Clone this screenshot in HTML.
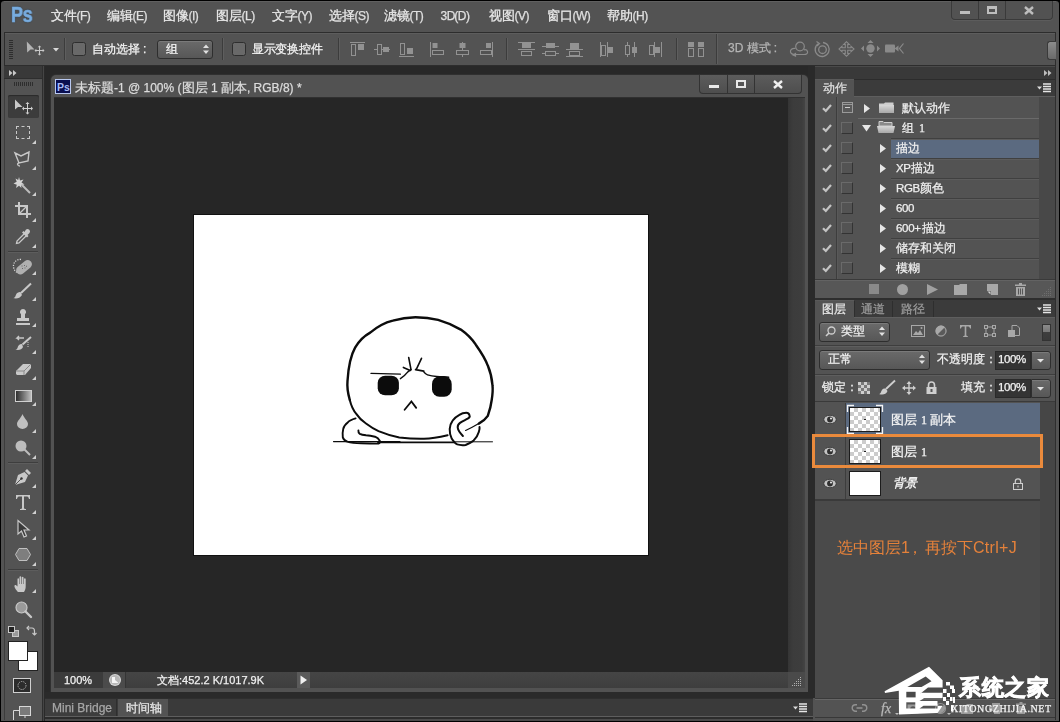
<!DOCTYPE html>
<html><head><meta charset="utf-8">
<style>
*{box-sizing:border-box;margin:0;padding:0}
html,body{width:1060px;height:722px;overflow:hidden;background:#000}
body{position:relative;font-family:"Liberation Sans",sans-serif;font-size:12px;color:#e6e6e6}
.a{position:absolute}
.t{position:absolute;white-space:nowrap;line-height:1;will-change:transform;-webkit-text-stroke:0.25px currentColor}
svg{position:absolute;overflow:visible}
.cb{width:14px;height:14px;border:1.5px solid #2e2e2e;border-radius:2.5px;background:#696969}
.sel{border:1px solid #2e2e2e;border-radius:3px;background:linear-gradient(#6a6a6a,#575757);box-shadow:inset 0 1px 0 #7a7a7a}
.lt{font-size:12px}
.mi{top:9px;font-size:13px;color:#ebebeb}
.mi span{font-size:12px;letter-spacing:-0.5px;color:#e0e0e0;margin-left:-0.5px}
</style></head><body>
<!-- app frame -->
<div class="a" style="left:1px;top:1px;width:1058px;height:720px;background:#535353;border-radius:3px 3px 0 0"></div>

<!-- MENU BAR -->
<div class="a" style="left:4px;top:1px;width:1052px;height:1px;background:#606060"></div>
<div id="menubar">
<div class="t" style="left:11px;top:4px;font-size:22px;font-weight:bold;color:#78acdf;letter-spacing:-0.5px;transform:scaleX(0.82);transform-origin:0 0;-webkit-text-stroke:0.6px #78acdf;text-shadow:0 0 2px #213a55">Ps</div>
<div class="t mi" style="left:51px">文件<span>(F)</span></div>
<div class="t mi" style="left:107px">编辑<span>(E)</span></div>
<div class="t mi" style="left:163px">图像<span>(I)</span></div>
<div class="t mi" style="left:216px">图层<span>(L)</span></div>
<div class="t mi" style="left:272px">文字<span>(Y)</span></div>
<div class="t mi" style="left:329px">选择<span>(S)</span></div>
<div class="t mi" style="left:384px">滤镜<span>(T)</span></div>
<div class="t mi" style="left:441px"><span style="font-size:12px">3D</span><span>(D)</span></div>
<div class="t mi" style="left:489px">视图<span>(V)</span></div>
<div class="t mi" style="left:547px">窗口<span>(W)</span></div>
<div class="t mi" style="left:607px">帮助<span>(H)</span></div>
<!-- window controls -->
<div class="a" style="left:951px;top:1px;width:102px;height:19px;border:1px solid #3a3a3a;border-top:none;border-radius:0 0 4px 4px;background:#525252;box-shadow:0 1px 0 #5c5c5c"></div>
<div class="a" style="left:978px;top:1px;width:1px;height:18px;background:#3a3a3a"></div>
<div class="a" style="left:1005px;top:1px;width:1px;height:18px;background:#3a3a3a"></div>
<div class="a" style="left:960px;top:11px;width:10px;height:3px;background:#bdbdbd"></div>
<div class="a" style="left:987px;top:6px;width:10px;height:8px;border:2px solid #bdbdbd;border-top-width:3px"></div>
<svg style="left:1024px;top:6px" width="10" height="9"><path d="M1 1L9 8M9 1L1 8" stroke="#bdbdbd" stroke-width="2.4"/></svg>
</div>

<!-- OPTIONS TOOLBAR -->
<div class="a" style="left:4px;top:32px;width:1052px;height:34px;background:#535353;border:1px solid #2d2d2d"></div>
<div class="a" style="left:5px;top:33px;width:1050px;height:1px;background:#5d5d5d"></div>
<!-- grip -->
<div class="a" style="left:9px;top:40px;width:4px;height:20px;background:repeating-linear-gradient(#2e2e2e 0 1px,transparent 1px 2px)"></div>
<!-- move tool icon -->
<svg style="left:26px;top:41px" width="20" height="16"><path d="M0.8 0.5L1.2 11.5L4.5 8.5L8.5 8.5Z" fill="#b4b4b4"/><path d="M13.5 5.5V13.5M9.5 9.5H17.5" stroke="#c8c8c8" stroke-width="1"/><path d="M13.5 4.5l-1.8 1.8h3.6zM13.5 14.5l-1.8-1.8h3.6zM8.5 9.5l1.8-1.8v3.6zM18.5 9.5l-1.8-1.8v3.6z" fill="#c8c8c8"/></svg>
<svg style="left:53px;top:48px" width="6" height="4"><path d="M0 0H6L3 3.5Z" fill="#d8d8d8"/></svg>
<div class="a" style="left:64px;top:38px;width:1px;height:22px;background:#3c3c3c;box-shadow:1px 0 0 #5e5e5e"></div>
<div class="a cb" style="left:72px;top:42px"></div>
<div class="t" style="left:92px;top:43px;font-size:12px;color:#f4f4f4">自动选择<span style="margin-left:3px">:</span></div>
<div class="a sel" style="left:157px;top:40px;width:56px;height:19px"></div>
<div class="t" style="left:166px;top:43px;font-size:12px;color:#f4f4f4">组</div>
<svg style="left:203px;top:44px" width="6" height="11"><path d="M0 4L3 0.5L6 4ZM0 6.5L3 10L6 6.5Z" fill="#e0e0e0"/></svg>
<div class="a" style="left:222px;top:38px;width:1px;height:22px;background:#3c3c3c;box-shadow:1px 0 0 #5e5e5e"></div>
<div class="a cb" style="left:232px;top:42px"></div>
<div class="t" style="left:252px;top:43px;font-size:12px;color:#f4f4f4;letter-spacing:-0.3px">显示变换控件</div>
<div class="a" style="left:338px;top:38px;width:1px;height:22px;background:#3c3c3c;box-shadow:1px 0 0 #5e5e5e"></div>
<!-- align icons -->
<svg style="left:350px;top:42px" width="16" height="15" fill="none" stroke="#929292"><path d="M0 0.5H15"/><rect x="1.5" y="2.5" width="4" height="11"/><rect x="8" y="2" width="6" height="6" fill="#929292" stroke="none"/></svg>
<svg style="left:374px;top:42px" width="16" height="15" fill="none" stroke="#929292"><path d="M0 7.5H16"/><rect x="3.5" y="2.5" width="4" height="10" fill="#535353"/><rect x="9" y="5" width="6" height="5" fill="#929292" stroke="none"/></svg>
<svg style="left:399px;top:42px" width="16" height="15" fill="none" stroke="#929292"><path d="M0 14.5H15"/><rect x="1.5" y="1.5" width="4" height="11"/><rect x="8" y="6" width="6" height="6" fill="#929292" stroke="none"/></svg>
<svg style="left:430px;top:42px" width="15" height="15" fill="none" stroke="#929292"><path d="M0.5 0V15"/><rect x="2.5" y="1" width="5" height="5" fill="#929292" stroke="none"/><rect x="2.5" y="8.5" width="11" height="4"/></svg>
<svg style="left:455px;top:42px" width="15" height="15" fill="none" stroke="#929292"><path d="M7.5 0V15"/><rect x="4.5" y="1" width="6" height="5" fill="#929292" stroke="none"/><rect x="1.5" y="8.5" width="12" height="4" fill="#535353"/></svg>
<svg style="left:479px;top:42px" width="15" height="15" fill="none" stroke="#929292"><path d="M13.5 0V15"/><rect x="7" y="1" width="5" height="5" fill="#929292" stroke="none"/><rect x="1.5" y="8.5" width="11" height="4"/></svg>
<div class="a" style="left:506px;top:38px;width:1px;height:22px;background:#3c3c3c;box-shadow:1px 0 0 #5e5e5e"></div>
<svg style="left:518px;top:42px" width="17" height="15" fill="none" stroke="#929292"><path d="M0 0.5H17M0 7.5H17"/><rect x="4" y="1" width="9" height="5" fill="#929292" stroke="none"/><rect x="3.5" y="9.5" width="10" height="4"/></svg>
<svg style="left:542px;top:42px" width="17" height="15" fill="none" stroke="#929292"><path d="M0 4.5H17M0 11.5H17"/><rect x="4" y="1" width="9" height="5" fill="#929292" stroke="none"/><rect x="3.5" y="9.5" width="10" height="4" fill="#535353"/></svg>
<svg style="left:566px;top:42px" width="17" height="15" fill="none" stroke="#929292"><path d="M0 7.5H17M0 14.5H17"/><rect x="4" y="1" width="9" height="6" fill="#929292" stroke="none"/><rect x="3.5" y="9.5" width="10" height="4"/></svg>
<svg style="left:600px;top:42px" width="14" height="15" fill="none" stroke="#929292"><path d="M0.5 0V15M7.5 0V15"/><rect x="1.5" y="3.5" width="4" height="10"/><rect x="8" y="5" width="5" height="6" fill="#929292" stroke="none"/></svg>
<svg style="left:624px;top:42px" width="14" height="15" fill="none" stroke="#929292"><path d="M3.5 0V15M10.5 0V15"/><rect x="1.5" y="3.5" width="4" height="9" fill="#535353"/><rect x="8" y="5" width="5" height="6" fill="#929292" stroke="none"/></svg>
<svg style="left:648px;top:42px" width="14" height="15" fill="none" stroke="#929292"><path d="M6.5 0V15M13.5 0V15"/><rect x="1.5" y="3.5" width="4" height="9"/><rect x="7" y="5" width="5" height="6" fill="#929292" stroke="none"/></svg>
<div class="a" style="left:676px;top:38px;width:1px;height:22px;background:#3c3c3c;box-shadow:1px 0 0 #5e5e5e"></div>
<svg style="left:688px;top:42px" width="16" height="15" fill="none" stroke="#929292"><rect x="0.5" y="6.5" width="5" height="8"/><rect x="10.5" y="6.5" width="5" height="8"/><rect x="0" y="0" width="6" height="5" fill="#929292" stroke="none"/><rect x="10" y="0" width="6" height="5" fill="#929292" stroke="none"/></svg>
<div class="a" style="left:716px;top:34px;width:1px;height:30px;background:#3c3c3c;box-shadow:1px 0 0 #5e5e5e"></div>
<div class="t" style="left:728px;top:42px;font-size:12px;color:#b4b4b4">3D 模式<span style="margin-left:3px">:</span></div>
<!-- 3d icons -->
<svg style="left:789px;top:41px" width="20" height="15" fill="none" stroke="#8a8a8a" stroke-width="1.2"><circle cx="11" cy="5.5" r="4.3"/><path d="M6.5 7.5C3 7 1 9 1.5 11C2 13 4 13.5 6 13.5H15C17.5 13.5 19 12.5 18.5 10.5C18 9 16.5 8.5 15 8.8"/><path d="M4 14L6.5 12.5L6.5 15Z" fill="#8a8a8a"/></svg>
<svg style="left:814px;top:41px" width="17" height="16" fill="none" stroke="#8a8a8a" stroke-width="1.3"><path d="M4.5 2.5A7 7 0 1 0 9 1.5"/><circle cx="8.5" cy="8.7" r="3.8"/><path d="M2.5 0.5L5.5 2.5L3 5" stroke-width="1.2"/></svg>
<svg style="left:838px;top:41px" width="17" height="16" fill="none" stroke="#8a8a8a" stroke-width="1.1"><path d="M8.5 0.7L5.7 3.5H7.3V6.8H4V5.2L1 8L4 10.8V9.2H7.3V12.5H5.7L8.5 15.3L11.3 12.5H9.7V9.2H13V10.8L16 8L13 5.2V6.8H9.7V3.5H11.3Z"/></svg>
<svg style="left:861px;top:40px" width="19" height="17" fill="#8a8a8a"><path d="M9.5 0L6.5 3H12.5ZM9.5 17L6.5 14H12.5ZM0 8.5L3 5.5V11.5ZM19 8.5L16 5.5V11.5Z"/><circle cx="9.5" cy="8.5" r="4.2"/></svg>
<svg style="left:885px;top:43px" width="19" height="11" fill="#8a8a8a"><rect x="0" y="1.5" width="10" height="8" rx="1"/><path d="M9.5 5.5L13.5 2.5V8.5Z"/><path d="M18.5 0.5L14.5 5.5L18.5 10.5" fill="none" stroke="#8a8a8a" stroke-width="1.2"/></svg>
<div class="a" style="left:1047px;top:41px;width:9px;height:19px;background:linear-gradient(#8c8c8c,#6a6a6a);border-radius:3px 0 0 3px;border:1px solid #3a3a3a;border-right:none"></div>

<!-- WORKSPACE -->
<div class="a" style="left:42px;top:66px;width:772px;height:632px;background:#282828"></div>

<!-- LEFT TOOLS PANEL -->
<div class="a" style="left:4px;top:66px;width:38px;height:654px;background:#535353;border-left:1px solid #3c3c3c"></div>
<div class="a" style="left:4px;top:66px;width:38px;height:13px;background:#393939;border-bottom:1px solid #2e2e2e"></div>
<svg style="left:9px;top:70px" width="8" height="6" fill="#c8c8c8"><path d="M0 0L3.5 3L0 6ZM4 0L7.5 3L4 6Z"/></svg>
<div class="a" style="left:14px;top:82px;width:19px;height:4px;background:repeating-linear-gradient(90deg,#2e2e2e 0 1px,transparent 1px 2px)"></div>
<div class="a" style="left:8px;top:95px;width:31px;height:23px;background:#3c3c3c;border-radius:2px;box-shadow:inset 0 1px 1px #2a2a2a"></div>
<!-- move -->
<svg style="left:14px;top:99px" width="20" height="15"><path d="M1 0.5V10.5L4 8H8.5Z" fill="#c8c8c8"/><path d="M13.5 4.5V14M9 9.5H18" stroke="#d0d0d0" stroke-width="1"/><path d="M13.5 3l-2 2h4zM13.5 15.5l-2-2h4zM8 9.5l2-2v4zM19 9.5l-2-2v4z" fill="#d0d0d0"/></svg>
<!-- marquee -->
<div class="a" style="left:16px;top:126px;width:14px;height:13px;border:1.5px dashed #c8c8c8"></div>
<svg style="left:32px;top:140px" width="4" height="4"><path d="M4 0V4H0Z" fill="#d0d0d0"/></svg>
<!-- lasso -->
<svg style="left:14px;top:151px" width="17" height="16" fill="none" stroke="#c8c8c8" stroke-width="1.4"><path d="M1 2L7 5L15 1L14 10L5 12ZM5 12C3 12 3 15 6 15"/></svg>
<svg style="left:32px;top:166px" width="4" height="4"><path d="M4 0V4H0Z" fill="#d0d0d0"/></svg>
<!-- wand -->
<svg style="left:13px;top:176px" width="19" height="19"><path d="M6 1L7 4.5L10.5 3.5L8.5 6.5L11.5 8.5L8 9L8.5 12L6 9.8L3 12L3.8 8.7L0.5 7.5L3.7 5.8L2.5 2.5L5.2 4Z" fill="#d4d4d4"/><path d="M8.5 8.5L17 17" stroke="#bdbdbd" stroke-width="2"/></svg>
<svg style="left:32px;top:192px" width="4" height="4"><path d="M4 0V4H0Z" fill="#d0d0d0"/></svg>
<!-- crop -->
<svg style="left:15px;top:202px" width="16" height="16" fill="none" stroke="#c8c8c8" stroke-width="2"><path d="M4 0V12H16M0 4H12V16"/><path d="M4 12L12 4" stroke-width="1.2"/></svg>
<svg style="left:32px;top:218px" width="4" height="4"><path d="M4 0V4H0Z" fill="#d0d0d0"/></svg>
<!-- eyedropper -->
<svg style="left:15px;top:228px" width="17" height="17"><path d="M11 1.5a2.5 2.5 0 0 1 3.5 3.5l-2 2l1 1l-1.5 1.5l-5-5l1.5-1.5l1 1z" fill="#c8c8c8"/><path d="M9 6L2 13L1.5 15.5L4 15L11 8" fill="none" stroke="#c8c8c8" stroke-width="1.3"/></svg>
<svg style="left:32px;top:244px" width="4" height="4"><path d="M4 0V4H0Z" fill="#d0d0d0"/></svg>
<div class="a" style="left:8px;top:251px;width:30px;height:1px;background:#3e3e3e;box-shadow:0 1px 0 #5d5d5d"></div>
<!-- healing -->
<svg style="left:12px;top:258px" width="21" height="17"><path d="M9 1.5C4 1 1 5 1.5 9C2 12 3.5 14 6 14.5" fill="none" stroke="#d8d8d8" stroke-width="1.3" stroke-dasharray="1.2 1.3"/><rect x="3" y="5" width="18" height="8.5" rx="4.2" transform="rotate(-40 12 9.2)" fill="#b0b0b0"/><path d="M9.5 7.5h1v1h-1zM12 7h1v1h-1zM10 10h1v1h-1zM12.5 9.5h1v1h-1zM14 7.8h1v1h-1z" fill="#6a6a6a"/></svg>
<svg style="left:32px;top:271px" width="4" height="4"><path d="M4 0V4H0Z" fill="#d0d0d0"/></svg>
<!-- brush -->
<svg style="left:13px;top:283px" width="19" height="16"><path d="M18 0.5L8 10" stroke="#c8c8c8" stroke-width="2"/><path d="M7.5 9C4.5 8.5 3 11 2.5 13C2 14.5 1 15 0 15C3 16 7 15.5 9 12Z" fill="#c8c8c8"/></svg>
<svg style="left:32px;top:297px" width="4" height="4"><path d="M4 0V4H0Z" fill="#d0d0d0"/></svg>
<!-- stamp -->
<svg style="left:15px;top:309px" width="16" height="17" fill="#c8c8c8"><path d="M8 0a3 3 0 0 1 2 5.3V9H14V12H2V9H6V5.3A3 3 0 0 1 8 0Z"/><rect x="1" y="14" width="14" height="2"/></svg>
<svg style="left:32px;top:323px" width="4" height="4"><path d="M4 0V4H0Z" fill="#d0d0d0"/></svg>
<!-- history brush -->
<svg style="left:14px;top:336px" width="18" height="15"><path d="M17 1L8.5 8.5" stroke="#c8c8c8" stroke-width="2"/><path d="M8 8C5 8 4 10 3.5 12C3 13 2 13.5 1 13.5C4 14.5 8 14 9 11Z" fill="#c8c8c8"/><path d="M10 2H3L5 0M3 2L5 4" fill="none" stroke="#c8c8c8" stroke-width="1.4"/><path d="M14 6V11" stroke="#c8c8c8" stroke-dasharray="1 1"/></svg>
<svg style="left:32px;top:350px" width="4" height="4"><path d="M4 0V4H0Z" fill="#d0d0d0"/></svg>
<!-- eraser -->
<svg style="left:15px;top:362px" width="17" height="15"><path d="M1 9L8 2H16L16 6L10 13H2L1 12Z" fill="#c8c8c8"/><path d="M1 9H9L16 2M9 9V13" fill="none" stroke="#8a8a8a" stroke-width="1"/></svg>
<svg style="left:32px;top:376px" width="4" height="4"><path d="M4 0V4H0Z" fill="#d0d0d0"/></svg>
<!-- gradient -->
<div class="a" style="left:15px;top:390px;width:17px;height:12px;border:1px solid #d0d0d0;background:linear-gradient(90deg,#2e2e2e,#bdbdbd)"></div>
<svg style="left:32px;top:402px" width="4" height="4"><path d="M4 0V4H0Z" fill="#d0d0d0"/></svg>
<!-- blur drop -->
<svg style="left:16px;top:414px" width="13" height="15"><path d="M6.5 0C5 4 1 7 1 10a5.5 5 0 0 0 11 0C12 7 8 4 6.5 0Z" fill="#c0c0c0"/></svg>
<svg style="left:32px;top:429px" width="4" height="4"><path d="M4 0V4H0Z" fill="#d0d0d0"/></svg>
<!-- dodge -->
<svg style="left:15px;top:440px" width="16" height="16"><circle cx="6" cy="6" r="5.5" fill="#bdbdbd"/><path d="M9 9L15 15" stroke="#bdbdbd" stroke-width="2"/></svg>
<svg style="left:32px;top:455px" width="4" height="4"><path d="M4 0V4H0Z" fill="#d0d0d0"/></svg>
<div class="a" style="left:8px;top:462px;width:30px;height:1px;background:#3e3e3e;box-shadow:0 1px 0 #5d5d5d"></div>
<!-- pen -->
<svg style="left:14px;top:468px" width="18" height="18"><path d="M13 1L17 5L15 7L11 3Z" fill="#c8c8c8"/><path d="M10.5 4L14 7.5L11 14L1 17L4 7Z" fill="#c8c8c8"/><path d="M1 17L7 11" stroke="#555" stroke-width="1"/><circle cx="7.5" cy="10.5" r="1.2" fill="#333"/></svg>
<svg style="left:32px;top:484px" width="4" height="4"><path d="M4 0V4H0Z" fill="#d0d0d0"/></svg>
<!-- type -->
<svg style="left:16px;top:495px" width="14" height="15" fill="#c8c8c8"><path d="M0 0H14V4H13C12.5 2 12 1.5 10 1.5H8V13C8 13.5 8.5 14 10 14V15H4V14C5.5 14 6 13.5 6 13V1.5H4C2 1.5 1.5 2 1 4H0Z"/></svg>
<svg style="left:32px;top:510px" width="4" height="4"><path d="M4 0V4H0Z" fill="#d0d0d0"/></svg>
<!-- path select -->
<svg style="left:17px;top:520px" width="13" height="18"><path d="M1 0.5V14L4.5 11L7 17L9.5 16L7 10H12Z" fill="#3a3a3a" stroke="#c8c8c8" stroke-width="1.2"/></svg>
<svg style="left:32px;top:536px" width="4" height="4"><path d="M4 0V4H0Z" fill="#d0d0d0"/></svg>
<!-- shape -->
<svg style="left:15px;top:548px" width="16" height="13"><path d="M4 0.5H12L15.5 6.5L12 12.5H4L0.5 6.5Z" fill="#7e7e7e" stroke="#c0c0c0" stroke-width="1"/></svg>
<svg style="left:32px;top:562px" width="4" height="4"><path d="M4 0V4H0Z" fill="#d0d0d0"/></svg>
<div class="a" style="left:8px;top:569px;width:30px;height:1px;background:#3e3e3e;box-shadow:0 1px 0 #5d5d5d"></div>
<!-- hand -->
<svg style="left:14px;top:576px" width="17" height="16" fill="#c8c8c8"><path d="M4 16C2 14 0 11 0.5 9.5C1 8.5 2.5 9 3.5 10.5V3C3.5 2 5 2 5 3V8H5.5V1C5.5 0 7.2 0 7.2 1V8H7.8V1.5C7.8 0.5 9.5 0.5 9.5 1.5V8H10V3C10 2 11.7 2 11.7 3V10C11.7 13 11 14.5 10 16Z"/></svg>
<svg style="left:32px;top:589px" width="4" height="4"><path d="M4 0V4H0Z" fill="#d0d0d0"/></svg>
<!-- zoom -->
<svg style="left:15px;top:601px" width="17" height="17"><circle cx="6.5" cy="6.5" r="5.5" fill="#9a9a9a" stroke="#c8c8c8" stroke-width="1.2"/><path d="M10.5 10.5L16 16" stroke="#c8c8c8" stroke-width="2.4" stroke-linecap="round"/></svg>
<!-- small swatches -->
<div class="a" style="left:12px;top:630px;width:7px;height:7px;background:#9a9a9a;border:1px solid #c8c8c8"></div>
<div class="a" style="left:8px;top:626px;width:7px;height:7px;background:#222;border:1px solid #c8c8c8"></div>
<svg style="left:26px;top:625px" width="11" height="11" fill="none" stroke="#c8c8c8" stroke-width="1.2"><path d="M1 3H6C8 3 8.5 4 8.5 6V10"/><path d="M3 1L1 3L3 5M6.5 8L8.5 10L10.5 8"/></svg>
<!-- fg/bg -->
<div class="a" style="left:18px;top:651px;width:20px;height:20px;background:#fff;border:1px solid #222"></div>
<div class="a" style="left:8px;top:641px;width:20px;height:20px;background:#fff;border:1px solid #222"></div>
<!-- quick mask -->
<svg style="left:13px;top:678px" width="18" height="15"><rect x="0.5" y="0.5" width="17" height="14" fill="#2c2c2c" stroke="#d0d0d0"/><circle cx="9" cy="7.5" r="4" fill="none" stroke="#d0d0d0" stroke-dasharray="1 1.2"/></svg>
<!-- screen mode -->
<svg style="left:13px;top:706px" width="18" height="15"><rect x="6.5" y="0.5" width="11" height="9" fill="#7a7a7a" stroke="#d8d8d8"/><path d="M0.5 14V4.5H6" fill="none" stroke="#d8d8d8"/><path d="M12 10V12" stroke="#d8d8d8"/></svg>

<!-- DOC WINDOW -->
<div class="a" style="left:51px;top:75px;width:757px;height:617px;background:#525252;border-radius:5px 5px 0 0;box-shadow:0 0 0 1px #303030"></div>

<div class="a" style="left:54px;top:97px;width:751px;height:1px;background:#303030"></div>
<div class="a" style="left:54px;top:98px;width:751px;height:574px;background:#262626"></div>
<div class="a" style="left:788px;top:98px;width:17px;height:574px;background:linear-gradient(90deg,#353535,#3c3c3c 30%,#3d3d3d 80%,#444)"></div>
<!-- status bar -->
<div class="a" style="left:54px;top:672px;width:751px;height:16px;background:linear-gradient(#454545,#3e3e3e)"></div>
<div class="a" style="left:54px;top:672px;width:49px;height:16px;background:#3b3b3b"></div>
<div class="t" style="left:64px;top:675px;font-size:11px;color:#f2f2f2">100%</div>
<div class="a" style="left:103px;top:672px;width:23px;height:16px;background:#4b4b4b;border-right:1px solid #353535"></div>
<svg style="left:109px;top:674px" width="12" height="12"><circle cx="6" cy="6" r="6" fill="#d8d8d8"/><circle cx="6" cy="6" r="5" fill="#b8b8b8"/><path d="M3 3H6V6L9 8.5V9H3Z" fill="#f4f4f4"/></svg>
<div class="t" style="left:157px;top:675px;font-size:11px;color:#f0f0f0">文档:452.2 K/1017.9K</div>
<div class="a" style="left:297px;top:672px;width:13px;height:16px;background:#5a5a5a"></div>
<svg style="left:300px;top:675px" width="8" height="10"><path d="M0.5 0.5V9.5L7 5Z" fill="#f0f0f0"/></svg>
<div class="a" style="left:788px;top:672px;width:17px;height:16px;background:#4a4a4a"></div>
<svg style="left:792px;top:677px" width="10" height="10" fill="#b0b0b0"><path d="M8 0h1v1h-1zM6 2h1v1h-1zM8 2h1v1h-1zM4 4h1v1h-1zM6 4h1v1h-1zM8 4h1v1h-1zM2 6h1v1h-1zM4 6h1v1h-1zM6 6h1v1h-1zM8 6h1v1h-1zM0 8h1v1h-1zM2 8h1v1h-1zM4 8h1v1h-1zM6 8h1v1h-1zM8 8h1v1h-1z"/></svg>
<!-- title -->
<svg style="left:55px;top:79px" width="16" height="15"><rect x="0" y="0" width="16" height="15" fill="#b8c8f0"/><rect x="1" y="1" width="14" height="13" fill="#0a0f50"/><text x="2" y="11.5" font-family="Liberation Sans" font-size="10.5" font-weight="bold" fill="#a8bcf8">Ps</text></svg>
<div class="t" style="left:75px;top:81px;font-size:13px;color:#dcdcdc">未标题<span class="lt">-1 @ 100% (</span>图层<span class="lt"> 1 </span>副本<span class="lt">, RGB/8) *</span></div>
<div class="a" style="left:699px;top:75px;width:103px;height:19px;border:1px solid #333;border-top:none;border-radius:0 0 4px 4px;background:linear-gradient(#5c5c5c,#4e4e4e)"></div>
<div class="a" style="left:727px;top:75px;width:1px;height:18px;background:#333"></div>
<div class="a" style="left:754px;top:75px;width:1px;height:18px;background:#333"></div>
<div class="a" style="left:709px;top:85px;width:10px;height:3px;background:#e8e8e8"></div>
<div class="a" style="left:736px;top:80px;width:10px;height:8px;border:2px solid #e8e8e8;border-top-width:2px"></div>
<svg style="left:773px;top:80px" width="10" height="9"><path d="M1 1L9 8M9 1L1 8" stroke="#f0f0f0" stroke-width="2.4"/></svg>
<!-- canvas -->
<div class="a" style="left:193px;top:214px;width:456px;height:342px;background:#fff;border:1px solid #111"></div>
<svg style="left:0px;top:0px" width="1060" height="722" fill="none" stroke="#0c0c0c" stroke-linecap="round">
<path d="M333.5 441.6H400" stroke-width="1.1"/>
<path d="M378 442.3H454" stroke-width="1.8"/>
<path d="M454 441.8H492.5" stroke-width="1"/>
<path d="M349.8 400C347.5 392 347 386 347.5 381C348.5 365 351 355 355.1 347.7C359.5 340 364 336 370.2 332.6C378 326 385 322.5 392.8 320.6C400 318.5 408 317.3 415.5 317.2C423 317.2 431 318 438.1 319.8C446 322 453 325 460.8 329.6C467 334 472 339 475.8 344.7C481 352 485 358 487.9 365.8C490.5 372 492 379 492.5 385.5C493 390 492.5 395 491.7 400C491 406 489.5 411 487.8 415.9C485 420 482 422 478.8 423.6" stroke-width="2.4"/>
<path d="M478.8 423.6C474 426.5 470 428.5 465.6 430.5" stroke-width="1.2"/>
<path d="M349.8 400C351 405 353 410 356.3 413.9C359 418 362 421 366 423.5C370 426.5 374 429 378.5 431.2C385 434 392 436 399.3 437.4C408 438.5 416 439 424 438.8C432 438.5 440 437 447.6 435.3" stroke-width="2"/>
<rect x="377.7" y="375.7" width="21.2" height="19.6" rx="7.5" ry="7" fill="#0c0c0c" stroke="none"/>
<rect x="432" y="376.4" width="19.7" height="20.4" rx="7.5" ry="7.5" fill="#0c0c0c" stroke="none"/>
<path d="M371 373.4C381 373.6 391 374 400.4 374.2" stroke-width="1.3"/>
<path d="M400.4 378.7C403 377 405 375.5 406.4 373.4C408 371.5 409.5 370.5 411 369.6" stroke-width="1.4"/>
<path d="M408.7 357.5L411 369.6M403.4 367.4L410.2 370.4M421.5 358.3L416.2 369.6M415.5 369.6L423.8 371.1" stroke-width="1.6"/>
<path d="M423.8 371.9C425 373.5 426 374.5 427.5 374.9C431 376 434 376.3 436.6 376.4C441 376.6 445 377 448.7 377.2" stroke-width="1.5"/>
<path d="M404.6 409.8L411.4 401.5L416.2 407.9" stroke-width="1.8" stroke-linejoin="miter"/>
<path d="M355.6 418.4C352 419.5 349.5 420.5 348 422.2C345 424.5 343.5 427 343.2 429.1C342.5 432 342.5 435 342.8 437.4C343.5 439.5 345 441 347.3 441.6C352 443 356 443.2 361.2 443.3C367 443.5 373 443.6 378.5 443.6C380 443 380.5 442 379.9 440.9C378.5 438.5 377 437.5 375 436.7C372 436 369 435.5 366 435.3C363 435 361 434.5 359.8 433.9C358.5 433 358.3 431.5 358.4 430.5" stroke-width="1.9"/>
<path d="M462.9 436C460 433 458 430.5 457.7 427.7C457.5 425.5 458.5 424 460 422.9C462.5 421 465.5 420 467.7 418.7C469.5 417.5 470 416 469.5 415.2C469 413.5 468 412.8 466.3 412.8C464 412.8 461.5 413.5 459.4 414.9C456.5 416.5 454 418.5 452.5 420.8C450.5 423.5 449.7 426 449.7 429.1C449.5 432.5 450.5 436 451.8 438.8C453.5 441.5 455 443.5 457.3 444.4C460 445.3 463 445.3 465.6 445C468.5 444 471 442.5 473.3 440.9C476 438 478 435 478.8 431.9C479.5 430 479.8 428.5 479.5 427" stroke-width="2"/>
</svg>

<!-- BOTTOM TAB BAR -->
<div class="a" style="left:42px;top:692px;width:771px;height:6px;background:#2a2a2a"></div>
<div class="a" style="left:45px;top:698px;width:768px;height:23px;background:#3a3a3a;border-top:1px solid #2e2e2e;border-bottom:2px solid #4a4a4a"></div>
<div class="a" style="left:45px;top:716px;width:768px;height:1px;background:#5e5e5e"></div>
<div class="a" style="left:45px;top:717px;width:768px;height:2px;background:#2c2c2c"></div>
<div class="a" style="left:42px;top:66px;width:1px;height:655px;background:#2e2e2e"></div>
<div class="a" style="left:43px;top:66px;width:1px;height:655px;background:#454545"></div>
<div class="a" style="left:44px;top:66px;width:1px;height:655px;background:#2a2a2a"></div>
<div class="a" style="left:45px;top:699px;width:72px;height:17px;background:#3d3d3d;border-right:1px solid #2e2e2e"></div>
<div class="t" style="left:52px;top:702px;font-size:12px;color:#a6a6a6">Mini Bridge</div>
<div class="a" style="left:118px;top:699px;width:50px;height:17px;background:#535353"></div>
<div class="t" style="left:126px;top:702px;font-size:12px;color:#e6e6e6">时间轴</div>
<svg style="left:793px;top:703px" width="15" height="9"><path d="M0 3.5H5L2.5 6.5Z" fill="#dcdcdc"/><path d="M6 1H14M6 3.5H14M6 6H14M6 8.5H14" stroke="#e6e6e6" stroke-width="1.3"/></svg>

<!-- RIGHT PANELS -->
<div class="a" style="left:808px;top:66px;width:7px;height:632px;background:#2a2a2a"></div>
<div class="a" style="left:815px;top:66px;width:241px;height:654px;background:#535353;border-right:1px solid #2e2e2e"></div>
<div class="a" style="left:815px;top:66px;width:240px;height:13px;background:#393939;border-top:1px solid #4a4a4a"></div>
<svg style="left:1044px;top:70px" width="8" height="6" fill="#bdbdbd"><path d="M0 0L3.5 3L0 6ZM4 0L7.5 3L4 6Z"/></svg>
<!-- actions tabs -->
<div class="a" style="left:815px;top:79px;width:240px;height:18px;background:#3b3b3b;border-top:1px solid #2c2c2c;border-bottom:1px solid #5e5e5e"></div>
<div class="a" style="left:815px;top:79px;width:39px;height:18px;background:#535353;border-top:1px solid #5a5a5a"></div>
<div class="t" style="left:823px;top:82px;font-size:12px;color:#e0e0e0">动作</div>
<svg style="left:1037px;top:83px" width="15" height="9"><path d="M0 3.5H5L2.5 6.5Z" fill="#dcdcdc"/><path d="M6 1H14M6 3.5H14M6 6H14M6 8.5H14" stroke="#e6e6e6" stroke-width="1.3"/></svg>
<!-- actions content -->
<div class="a" style="left:815px;top:97px;width:224px;height:182px;background:#535353"></div>
<div class="a" style="left:1039px;top:97px;width:16px;height:182px;background:#484848"></div>
<div class="a" style="left:836px;top:97px;width:1px;height:182px;background:#3d3d3d;box-shadow:1px 0 0 #595959"></div>
<svg style="left:822px;top:104px" width="10" height="8"><path d="M1 4.2L3.8 7L9 1" fill="none" stroke="#c4c4c4" stroke-width="2.2"/></svg>
<div class="a" style="left:842px;top:102px;width:11px;height:11px;border:1px solid #9a9a9a;background:#5a5a5a"></div><div class="a" style="left:843px;top:104px;width:9px;height:1px;background:#9a9a9a"></div><div class="a" style="left:845px;top:107px;width:5px;height:1px;background:#cfcfcf"></div>
<svg style="left:864px;top:104px" width="6" height="9"><path d="M0 0V9L6 4.5Z" fill="#e6e6e6"/></svg>
<svg style="left:879px;top:102px" width="15" height="12"><path d="M0 1.5H5L6 0.5H14.5V11H0Z" fill="#cfcfcf"/><path d="M0 3H15V11H0Z" fill="url(#fg)"/></svg>
<div class="t" style="left:902px;top:102px;font-size:12px;color:#efefef">默认动作</div>
<div class="a" style="left:858px;top:118px;width:181px;height:1px;background:#6a6a6a"></div>
<svg style="left:822px;top:124px" width="10" height="8"><path d="M1 4.2L3.8 7L9 1" fill="none" stroke="#c4c4c4" stroke-width="2.2"/></svg>
<div class="a" style="left:841px;top:122px;width:12px;height:12px;border:1px solid #6a6a6a;border-right-color:#333;border-bottom-color:#333;background:#535353"></div>
<svg style="left:862px;top:125px" width="9" height="7"><path d="M0 0H9L4.5 6.5Z" fill="#e6e6e6"/></svg>
<svg style="left:877px;top:121px" width="18" height="12"><path d="M2 0.5H6L7 1.5H15V5H2Z" fill="#8a8a8a" stroke="#cfcfcf" stroke-width="1"/><path d="M0 5H18L16.5 12H1.5Z" fill="url(#fg)"/></svg>
<div class="t" style="left:902px;top:122px;font-size:12px;color:#efefef">组<span style="font-family:'Liberation Serif',serif;margin-left:5px">1</span></div>
<div class="a" style="left:891px;top:138px;width:148px;height:1px;background:#404040;box-shadow:0 1px 0 #5c5c5c"></div>
<svg style="left:822px;top:144px" width="10" height="8"><path d="M1 4.2L3.8 7L9 1" fill="none" stroke="#c4c4c4" stroke-width="2.2"/></svg>
<div class="a" style="left:841px;top:142px;width:12px;height:12px;border:1px solid #6a6a6a;border-right-color:#333;border-bottom-color:#333;background:#535353"></div>
<div class="a" style="left:891px;top:140px;width:148px;height:18px;background:#5b6a80;box-shadow:0 1px 0 #3d4450"></div>
<svg style="left:880px;top:144px" width="6" height="9"><path d="M0 0V9L6 4.5Z" fill="#e6e6e6"/></svg>
<div class="t" style="left:896px;top:142px;font-size:12px;color:#efefef">描边</div>
<div class="a" style="left:891px;top:158px;width:148px;height:1px;background:#404040;box-shadow:0 1px 0 #5c5c5c"></div>
<svg style="left:822px;top:164px" width="10" height="8"><path d="M1 4.2L3.8 7L9 1" fill="none" stroke="#c4c4c4" stroke-width="2.2"/></svg>
<div class="a" style="left:841px;top:162px;width:12px;height:12px;border:1px solid #6a6a6a;border-right-color:#333;border-bottom-color:#333;background:#535353"></div>
<svg style="left:880px;top:164px" width="6" height="9"><path d="M0 0V9L6 4.5Z" fill="#e6e6e6"/></svg>
<div class="t" style="left:896px;top:162px;font-size:12px;color:#efefef"><span style="font-size:11.5px;letter-spacing:-0.4px">XP</span>描边</div>
<div class="a" style="left:891px;top:178px;width:148px;height:1px;background:#404040;box-shadow:0 1px 0 #5c5c5c"></div>
<svg style="left:822px;top:184px" width="10" height="8"><path d="M1 4.2L3.8 7L9 1" fill="none" stroke="#c4c4c4" stroke-width="2.2"/></svg>
<div class="a" style="left:841px;top:182px;width:12px;height:12px;border:1px solid #6a6a6a;border-right-color:#333;border-bottom-color:#333;background:#535353"></div>
<svg style="left:880px;top:184px" width="6" height="9"><path d="M0 0V9L6 4.5Z" fill="#e6e6e6"/></svg>
<div class="t" style="left:896px;top:182px;font-size:12px;color:#efefef"><span style="font-size:11.5px;letter-spacing:-0.4px">RGB</span>颜色</div>
<div class="a" style="left:891px;top:198px;width:148px;height:1px;background:#404040;box-shadow:0 1px 0 #5c5c5c"></div>
<svg style="left:822px;top:204px" width="10" height="8"><path d="M1 4.2L3.8 7L9 1" fill="none" stroke="#c4c4c4" stroke-width="2.2"/></svg>
<div class="a" style="left:841px;top:202px;width:12px;height:12px;border:1px solid #6a6a6a;border-right-color:#333;border-bottom-color:#333;background:#535353"></div>
<svg style="left:880px;top:204px" width="6" height="9"><path d="M0 0V9L6 4.5Z" fill="#e6e6e6"/></svg>
<div class="t" style="left:896px;top:202px;font-size:12px;color:#efefef"><span style="font-size:11.5px;letter-spacing:-0.4px">600</span></div>
<div class="a" style="left:891px;top:218px;width:148px;height:1px;background:#404040;box-shadow:0 1px 0 #5c5c5c"></div>
<svg style="left:822px;top:224px" width="10" height="8"><path d="M1 4.2L3.8 7L9 1" fill="none" stroke="#c4c4c4" stroke-width="2.2"/></svg>
<div class="a" style="left:841px;top:222px;width:12px;height:12px;border:1px solid #6a6a6a;border-right-color:#333;border-bottom-color:#333;background:#535353"></div>
<svg style="left:880px;top:224px" width="6" height="9"><path d="M0 0V9L6 4.5Z" fill="#e6e6e6"/></svg>
<div class="t" style="left:896px;top:222px;font-size:12px;color:#efefef"><span style="font-size:11.5px;letter-spacing:-0.3px;margin-right:1px">600+</span>描边</div>
<div class="a" style="left:891px;top:238px;width:148px;height:1px;background:#404040;box-shadow:0 1px 0 #5c5c5c"></div>
<svg style="left:822px;top:244px" width="10" height="8"><path d="M1 4.2L3.8 7L9 1" fill="none" stroke="#c4c4c4" stroke-width="2.2"/></svg>
<div class="a" style="left:841px;top:242px;width:12px;height:12px;border:1px solid #6a6a6a;border-right-color:#333;border-bottom-color:#333;background:#535353"></div>
<svg style="left:880px;top:244px" width="6" height="9"><path d="M0 0V9L6 4.5Z" fill="#e6e6e6"/></svg>
<div class="t" style="left:896px;top:242px;font-size:12px;color:#efefef">储存和关闭</div>
<div class="a" style="left:891px;top:258px;width:148px;height:1px;background:#404040;box-shadow:0 1px 0 #5c5c5c"></div>
<svg style="left:822px;top:264px" width="10" height="8"><path d="M1 4.2L3.8 7L9 1" fill="none" stroke="#c4c4c4" stroke-width="2.2"/></svg>
<div class="a" style="left:841px;top:262px;width:12px;height:12px;border:1px solid #6a6a6a;border-right-color:#333;border-bottom-color:#333;background:#535353"></div>
<svg style="left:880px;top:264px" width="6" height="9"><path d="M0 0V9L6 4.5Z" fill="#e6e6e6"/></svg>
<div class="t" style="left:896px;top:262px;font-size:12px;color:#efefef">模糊</div>
<svg width="0" height="0" style="left:0;top:0"><defs><linearGradient id="fg" x1="0" y1="0" x2="0" y2="1"><stop offset="0" stop-color="#d8d8d8"/><stop offset="1" stop-color="#a8a8a8"/></linearGradient></defs></svg>
<!-- actions bottom bar -->
<div class="a" style="left:815px;top:279px;width:240px;height:20px;background:#575757;border-top:1px solid #3a3a3a;box-shadow:inset 0 1px 0 #636363"></div>
<div class="a" style="left:869px;top:284px;width:10px;height:10px;background:#8a8a8a"></div>
<div class="a" style="left:897px;top:284px;width:11px;height:11px;border-radius:50%;background:#a0a0a0"></div>
<svg style="left:927px;top:284px" width="11" height="11"><path d="M0 0V11L11 5.5Z" fill="#a0a0a0"/></svg>
<svg style="left:954px;top:284px" width="13" height="11"><path d="M0 1H5L6 0H13V11H0Z" fill="#a8a8a8"/></svg>
<svg style="left:987px;top:284px" width="11" height="11"><path d="M0 0H11V11H4V7H0Z" fill="#a8a8a8"/><path d="M0.5 7.5H3.5V10.5Z" fill="#d0d0d0"/></svg>
<svg style="left:1015px;top:283px" width="11" height="13" fill="#a8a8a8"><path d="M4 0H7V1.5H11V3H0V1.5H4Z"/><path d="M1 4H10V13H1ZM3 5.5V11.5H4V5.5ZM5 5.5V11.5H6V5.5ZM7 5.5V11.5H8V5.5Z" fill-rule="evenodd"/></svg>
<svg style="left:1042px;top:287px" width="10" height="10" fill="#6e6e6e"><path d="M8 0h1v1h-1zM6 2h1v1h-1zM8 2h1v1h-1zM4 4h1v1h-1zM6 4h1v1h-1zM8 4h1v1h-1zM2 6h1v1h-1zM4 6h1v1h-1zM6 6h1v1h-1zM8 6h1v1h-1zM0 8h1v1h-1zM2 8h1v1h-1zM4 8h1v1h-1zM6 8h1v1h-1zM8 8h1v1h-1z"/></svg>
<div class="a" style="left:815px;top:298px;width:240px;height:2px;background:#2e2e2e"></div>
<!-- layers tabs -->
<div class="a" style="left:815px;top:300px;width:240px;height:18px;background:#3b3b3b;border-bottom:1px solid #5e5e5e"></div>
<div class="a" style="left:815px;top:300px;width:39px;height:18px;background:#535353;border-top:1px solid #5a5a5a"></div>
<div class="a" style="left:854px;top:301px;width:1px;height:16px;background:#2e2e2e"></div>
<div class="a" style="left:892px;top:301px;width:1px;height:16px;background:#2e2e2e"></div>
<div class="a" style="left:933px;top:301px;width:1px;height:16px;background:#2e2e2e"></div>
<div class="t" style="left:822px;top:303px;font-size:12px;color:#e6e6e6">图层</div>
<div class="t" style="left:861px;top:303px;font-size:12px;color:#9a9a9a">通道</div>
<div class="t" style="left:901px;top:303px;font-size:12px;color:#9a9a9a">路径</div>
<svg style="left:1037px;top:304px" width="15" height="9"><path d="M0 3.5H5L2.5 6.5Z" fill="#dcdcdc"/><path d="M6 1H14M6 3.5H14M6 6H14M6 8.5H14" stroke="#e6e6e6" stroke-width="1.3"/></svg>
<!-- filter row -->
<div class="a sel" style="left:819px;top:322px;width:71px;height:20px"></div>
<svg style="left:825px;top:326px" width="11" height="11"><circle cx="6.5" cy="4.5" r="3.5" fill="none" stroke="#cfcfcf" stroke-width="1.3"/><path d="M4 7L1 10" stroke="#cfcfcf" stroke-width="1.6"/></svg>
<div class="t" style="left:841px;top:325px;font-size:12px;color:#f0f0f0">类型</div>
<svg style="left:879px;top:326px" width="6" height="11"><path d="M0 4L3 0.5L6 4ZM0 6.5L3 10L6 6.5Z" fill="#e0e0e0"/></svg>
<svg style="left:911px;top:325px" width="14" height="12"><rect x="0.5" y="0.5" width="13" height="11" fill="none" stroke="#a8a8a8"/><path d="M2 10L5 6L7 8L9 5L12 10Z" fill="#a8a8a8"/><circle cx="10.5" cy="3" r="1" fill="#a8a8a8"/></svg>
<svg style="left:935px;top:325px" width="12" height="12"><circle cx="6" cy="6" r="5.5" fill="#a8a8a8"/><path d="M2 10L10 2A5.5 5.5 0 0 1 2 10Z" fill="#5a5a5a"/><circle cx="6" cy="6" r="5" fill="none" stroke="#a8a8a8"/></svg>
<svg style="left:960px;top:325px" width="11" height="12" fill="#a8a8a8"><path d="M0 0H11V3.5H10C9.7 2 9 1.5 7.5 1.5H6.3V10.3C6.3 10.8 7 11 7.8 11V12H3.2V11C4 11 4.7 10.8 4.7 10.3V1.5H3.5C2 1.5 1.3 2 1 3.5H0Z"/></svg>
<svg style="left:984px;top:325px" width="12" height="12" fill="none" stroke="#a8a8a8"><rect x="2" y="2" width="8" height="8"/><rect x="0.5" y="0.5" width="3" height="3" fill="#5a5a5a"/><rect x="8.5" y="0.5" width="3" height="3" fill="#5a5a5a"/><rect x="0.5" y="8.5" width="3" height="3" fill="#5a5a5a"/><rect x="8.5" y="8.5" width="3" height="3" fill="#5a5a5a"/></svg>
<svg style="left:1008px;top:325px" width="12" height="12"><path d="M4 0.5H9L11.5 3V10.5H4Z" fill="none" stroke="#a8a8a8"/><rect x="0" y="5" width="7" height="7" fill="#a8a8a8"/></svg>
<div class="a" style="left:1042px;top:324px;width:9px;height:17px;border:1px solid #333;background:linear-gradient(#8a8a8a,#777 45%,#3e3e3e 50%,#3a3a3a)"></div>
<div class="a" style="left:815px;top:345px;width:240px;height:1px;background:#3e3e3e;box-shadow:0 1px 0 #5e5e5e"></div>
<!-- blend row -->
<div class="a sel" style="left:819px;top:350px;width:111px;height:20px"></div>
<div class="t" style="left:828px;top:353px;font-size:12px;color:#f0f0f0">正常</div>
<svg style="left:919px;top:354px" width="6" height="11"><path d="M0 4L3 0.5L6 4ZM0 6.5L3 10L6 6.5Z" fill="#e0e0e0"/></svg>
<div class="t" style="left:937px;top:353px;font-size:12px;color:#f0f0f0">不透明度：</div>
<div class="a" style="left:995px;top:351px;width:36px;height:19px;background:#343434;border:1px solid #2a2a2a"></div>
<div class="t" style="left:998px;top:354px;font-size:11.5px;letter-spacing:-0.4px;color:#f4f4f4">100%</div>
<div class="a sel" style="left:1031px;top:351px;width:20px;height:19px;border-radius:0 3px 3px 0"></div>
<svg style="left:1037px;top:359px" width="7" height="4"><path d="M0 0H7L3.5 3.5Z" fill="#e6e6e6"/></svg>
<div class="a" style="left:815px;top:374px;width:240px;height:1px;background:#3e3e3e;box-shadow:0 1px 0 #5e5e5e"></div>
<!-- lock row -->
<div class="t" style="left:822px;top:381px;font-size:12px;color:#f0f0f0">锁定：</div>
<svg style="left:858px;top:382px" width="12" height="12"><rect width="12" height="12" fill="#7a7a7a"/><path d="M0 0h3v3H0zM6 0h3v3H6zM3 3h3v3H3zM9 3h3v3H9zM0 6h3v3H0zM6 6h3v3H6zM3 9h3v3H3zM9 9h3v3H9z" fill="#cfcfcf"/></svg>
<svg style="left:879px;top:380px" width="17" height="15"><path d="M16 0.5L7 9" stroke="#cfcfcf" stroke-width="1.8"/><path d="M6.5 8.5C3.5 8 2.5 10.5 2 12C1.5 13.5 0.5 14 0 14C3 15 7 15 8.5 11Z" fill="#cfcfcf"/></svg>
<svg style="left:902px;top:381px" width="14" height="14" fill="#cfcfcf"><path d="M7 0L4.5 3H6.3V6.3H3V4.5L0 7L3 9.5V7.7H6.3V11H4.5L7 14L9.5 11H7.7V7.7H11V9.5L14 7L11 4.5V6.3H7.7V3H9.5Z"/></svg>
<svg style="left:926px;top:381px" width="11" height="13"><path d="M2.5 6V4a3 3 0 0 1 6 0V6" fill="none" stroke="#cfcfcf" stroke-width="1.6"/><rect x="0.5" y="6" width="10" height="7" fill="#cfcfcf"/><rect x="4.5" y="8" width="2" height="3" fill="#555"/></svg>
<div class="t" style="left:961px;top:381px;font-size:12px;color:#f0f0f0">填充：</div>
<div class="a" style="left:995px;top:379px;width:36px;height:19px;background:#343434;border:1px solid #2a2a2a"></div>
<div class="t" style="left:998px;top:382px;font-size:11.5px;letter-spacing:-0.4px;color:#f4f4f4">100%</div>
<div class="a sel" style="left:1031px;top:379px;width:20px;height:19px;border-radius:0 3px 3px 0"></div>
<svg style="left:1037px;top:387px" width="7" height="4"><path d="M0 0H7L3.5 3.5Z" fill="#e6e6e6"/></svg>
<div class="a" style="left:815px;top:401px;width:240px;height:1px;background:#3a3a3a"></div>
<!-- layers list -->
<div class="a" style="left:815px;top:402px;width:225px;height:98px;background:#535353"></div>
<div class="a" style="left:1040px;top:402px;width:15px;height:296px;background:#464646"></div>
<div class="a" style="left:815px;top:500px;width:225px;height:198px;background:#4a4a4a;border-top:1px solid #3a3a3a"></div>
<div class="a" style="left:845px;top:403px;width:1px;height:97px;background:#3d3d3d"></div>
<div class="a" style="left:846px;top:403px;width:194px;height:32px;background:#5b6a80"></div>
<div class="a" style="left:815px;top:435px;width:225px;height:1px;background:#3a3a3a"></div>
<div class="a" style="left:815px;top:467px;width:225px;height:1px;background:#3a3a3a"></div>
<div class="a" style="left:815px;top:499px;width:225px;height:1px;background:#3a3a3a"></div>
<svg style="left:823px;top:414px" width="14" height="11"><ellipse cx="7" cy="5.5" rx="6.2" ry="4.2" fill="#c4c4c4" stroke="#2e2e2e" stroke-width="0.8"/><circle cx="7" cy="5.5" r="2.9" fill="#303030"/><circle cx="8" cy="4.5" r="1" fill="#f0f0f0"/></svg>
<svg style="left:823px;top:446px" width="14" height="11"><ellipse cx="7" cy="5.5" rx="6.2" ry="4.2" fill="#c4c4c4" stroke="#2e2e2e" stroke-width="0.8"/><circle cx="7" cy="5.5" r="2.9" fill="#303030"/><circle cx="8" cy="4.5" r="1" fill="#f0f0f0"/></svg>
<svg style="left:823px;top:478px" width="14" height="11"><ellipse cx="7" cy="5.5" rx="6.2" ry="4.2" fill="#c4c4c4" stroke="#2e2e2e" stroke-width="0.8"/><circle cx="7" cy="5.5" r="2.9" fill="#303030"/><circle cx="8" cy="4.5" r="1" fill="#f0f0f0"/></svg>
<div class="a" style="left:849px;top:407px;width:32px;height:25px;border:1.5px solid #1c1c1c;background-color:#fff;background-image:linear-gradient(45deg,#ccc 25%,transparent 25%,transparent 75%,#ccc 75%),linear-gradient(45deg,#ccc 25%,transparent 25%,transparent 75%,#ccc 75%);background-size:8px 8px;background-position:0 0,4px 4px"></div>
<div class="a" style="left:864px;top:419px;width:2px;height:1px;background:#222"></div>
<svg style="left:847px;top:405px" width="36" height="29" fill="none" stroke="#f4f4f4" stroke-width="1.3"><path d="M0.5 7V0.5H7M29 0.5H35.5V7M0.5 22V28.5H7M29 28.5H35.5V22"/></svg>
<div class="a" style="left:849px;top:439px;width:32px;height:25px;border:1.5px solid #1c1c1c;background-color:#fff;background-image:linear-gradient(45deg,#ccc 25%,transparent 25%,transparent 75%,#ccc 75%),linear-gradient(45deg,#ccc 25%,transparent 25%,transparent 75%,#ccc 75%);background-size:8px 8px;background-position:0 0,4px 4px"></div>
<div class="a" style="left:849px;top:471px;width:32px;height:25px;border:1.5px solid #1c1c1c;background:#fff"></div>
<div class="a" style="left:864px;top:451px;width:2px;height:1px;background:#222"></div>
<div class="t" style="left:891px;top:413px;font-size:13px;color:#f4f4f4">图层<span style="font-family:'Liberation Serif',serif;font-size:12px;margin:0 3px 0 4px">1</span>副本</div>
<div class="t" style="left:891px;top:445px;font-size:13px;color:#f4f4f4">图层<span style="font-family:'Liberation Serif',serif;font-size:12px;margin:0 3px 0 4px">1</span></div>
<div class="t" style="left:893px;top:477px;font-size:12px;font-style:italic;color:#f4f4f4;-webkit-text-stroke:0.3px #fff">背景</div>
<svg style="left:1013px;top:478px" width="10" height="12"><path d="M2.3 5.5V3.5a2.7 2.7 0 0 1 5.4 0V5.5" fill="none" stroke="#cfcfcf" stroke-width="1.2"/><rect x="0.5" y="5.5" width="9" height="6" fill="none" stroke="#cfcfcf"/><rect x="4.5" y="7.5" width="1" height="2" fill="#cfcfcf"/></svg>
<div class="a" style="left:812px;top:434px;width:231px;height:34px;border:3px solid #ea8a3c"></div>
<div class="t" style="left:837px;top:540px;font-size:16px;color:#e5813a;-webkit-text-stroke:0">选中图层1<span style="margin:0 2px 0 -3px">，</span>再按下<span style="letter-spacing:0.3px">Ctrl+J</span></div>
<!-- layers bottom bar -->
<div class="a" style="left:815px;top:698px;width:240px;height:20px;background:#535353;border-top:1px solid #3a3a3a;border-bottom:1px solid #383838;box-shadow:inset 0 1px 0 #666"></div>
<svg style="left:852px;top:704px" width="15" height="8" fill="none" stroke="#929292" stroke-width="1.4"><path d="M5 0.7H3.5a3.3 3.3 0 0 0 0 6.6H5M10 0.7h1.5a3.3 3.3 0 0 1 0 6.6H10M4.5 4H10.5"/></svg>
<div class="t" style="left:881px;top:702px;font-size:14px;font-style:italic;font-family:'Liberation Serif',serif;color:#b8b8b8">fx</div>
<!-- layers bottom icons -->
<svg style="left:895px;top:713px" width="4" height="3"><path d="M0 0H4L2 2Z" fill="#bdbdbd"/></svg>
<svg style="left:907px;top:704px" width="12" height="10"><rect x="0.5" y="0.5" width="11" height="9" fill="#9a9a9a"/><circle cx="6" cy="5" r="2.8" fill="#575757"/></svg>
<svg style="left:935px;top:703px" width="11" height="11"><circle cx="5.5" cy="5.5" r="5" fill="none" stroke="#929292" stroke-width="1.2"/><path d="M2 9L9 2A5 5 0 0 1 2 9Z" fill="#9a9a9a"/></svg>
<svg style="left:947px;top:713px" width="4" height="3"><path d="M0 0H4L2 2Z" fill="#bdbdbd"/></svg>
<svg style="left:961px;top:704px" width="12" height="10"><path d="M0 1H5L6 0H12V10H0Z" fill="#9a9a9a"/></svg>
<svg style="left:989px;top:703px" width="11" height="11"><path d="M3 0H11V11H5V8H0V3H3Z" fill="#9a9a9a"/></svg>
<svg style="left:1016px;top:702px" width="10" height="12" fill="#9a9a9a"><path d="M3.5 0H6.5V1.5H10V3H0V1.5H3.5Z"/><path d="M1 4H9V12H1Z"/></svg>
<!-- watermark -->
<svg style="left:0px;top:0px" width="1060" height="722">
<defs><mask id="wmm"><rect x="0" y="0" width="1060" height="722" fill="#000"/>
<path d="M884.6 691.2L929 666.8L942.6 680.3V706L937.5 713L899 714.5L898.8 690.8L885 693Z" fill="#fff"/>
<path d="M907.3 686.9L925.7 676.6L931.5 681.3L921.5 686.9Z" fill="#000"/>
<path d="M920.5 693.6L928 687.6H943V692.8H921Z" fill="#000"/>
<rect x="906.3" y="691.8" width="9.3" height="5.6" fill="#000"/>
<path d="M919.5 701L924 698.3H943V701Z" fill="#000"/>
<rect x="906.3" y="702.3" width="9" height="6.2" fill="#000"/>
<path d="M919.5 708.5L923.5 705.8H937.5V708.5Z" fill="#000"/>
<path d="M937.5 701V705.8H943V701Z" fill="#000"/>
</mask></defs>
<rect x="880" y="660" width="70" height="60" fill="#fff" mask="url(#wmm)"/>
<path d="M946 682h4v3.5h-4zM950 685.5h4v3.5h-4zM943 689h3.5v4h-3.5zM947 693h3v4h-3zM952 689h3v4h-3zM943 697h3v4h-3zM950 697h2.5v4h-2.5zM946 701h3v4h-3zM953 697h2v6h-2zM951 705h2v6h-2z" fill="#fff"/>
</svg>
<div class="t" style="left:959px;top:677px;font-size:22px;font-weight:900;color:#fff;letter-spacing:0.5px;-webkit-text-stroke:0.8px #fff">系统之家</div>
<div class="t" style="left:951px;top:704px;font-size:10px;font-family:'Liberation Serif',serif;color:#f4f4f4;letter-spacing:0.6px">XITONGZHIJIA.NET</div>

</body></html>
